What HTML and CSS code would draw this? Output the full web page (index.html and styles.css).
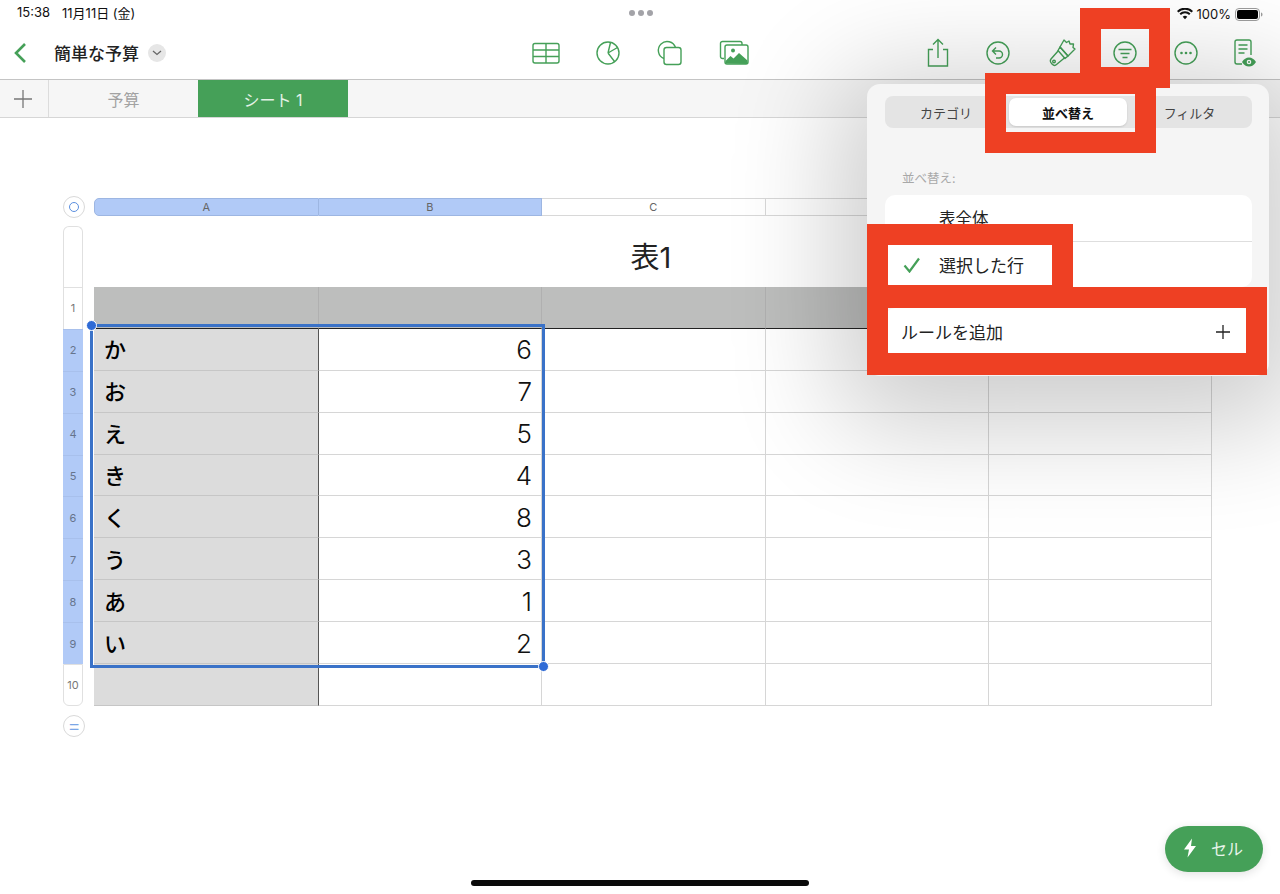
FILE: index.html
```html
<!DOCTYPE html>
<html lang="ja">
<head>
<meta charset="utf-8">
<title>簡単な予算</title>
<link rel="stylesheet" href="styles.css">
</head>
<body>
<div class="screen">
  <header class="status">
    <span class="time">15:38</span>
    <span class="date">11月11日 (金)</span>
    <span class="dots"><i></i><i></i><i></i></span>
    <span class="status-right">
      <svg class="wifi" width="16" height="12" viewBox="0 0 16 12"><path d="M8 11.200 5.700 8.800a3.300 3.300 0 0 1 4.600 0zM3.900 7 2.500 5.500a7.800 7.800 0 0 1 11 0L12.100 7a5.800 5.800 0 0 0-8.200 0zM1.400 4.500 0 3a11.300 11.300 0 0 1 16 0l-1.400 1.500a9.300 9.300 0 0 0-13.200 0z" fill="#111"/></svg>
      <span class="pct">100%</span>
      <svg width="28" height="13" viewBox="0 0 28 13"><rect x=".5" y=".5" width="24" height="12" rx="3.500" fill="none" stroke="#999"/><rect x="2" y="2" width="21" height="9" rx="2" fill="#000"/><path d="M26 4.500c1 .3 1.500 1 1.500 2s-.5 1.700-1.500 2z" fill="#999"/></svg>
    </span>
  </header>

  <nav class="toolbar">
    <div class="tb-left">
      <svg class="back" width="14" height="22" viewBox="0 0 14 22"><path d="M12 2 3 11l9 9" fill="none" stroke="#45a058" stroke-width="2.600"/></svg>
      <span class="doc">簡単な予算</span>
      <span class="doc-menu"><svg width="10" height="6" viewBox="0 0 10 6"><path d="M1 1l4 3.500L9 1" fill="none" stroke="#666" stroke-width="1.300"/></svg></span>
    </div>
    <div class="tb-center">
      <svg class="ic" width="30" height="30" viewBox="0 0 30 30"><g fill="none" stroke="#45a058" stroke-width="1.400"><rect x="2" y="5.500" width="26" height="19.500" rx="2"/><path d="M2 12h26M2 18.500h26M15 5.500V25"/></g></svg>
      <svg class="ic" width="30" height="30" viewBox="0 0 30 30"><g fill="none" stroke="#45a058" stroke-width="1.400"><circle cx="15" cy="15" r="11"/><path d="M15 15 17.500 4.500M15 15l9.500-5.500M15 15l6.500 8.500"/></g></svg>
      <svg class="ic" width="30" height="30" viewBox="0 0 30 30"><g fill="none" stroke="#45a058" stroke-width="1.400"><path d="M9 20.500a8.800 8.800 0 1 1 11.500-11"/><rect x="9" y="9.500" width="17" height="17" rx="2.500" fill="#fff"/></g></svg>
      <svg class="ic ic-media" width="30" height="30" viewBox="0 0 30 30"><g fill="none" stroke="#45a058" stroke-width="1.400"><path d="M5 20.500H3.500A2 2 0 0 1 1.500 18.500V5.500a2 2 0 0 1 2-2H21a2 2 0 0 1 2 2V7"/><rect x="6" y="7" width="23" height="19" rx="2"/></g><circle cx="14" cy="12.500" r="2" fill="#45a058"/><path d="M6.500 25.500V23l5-5 3 2.500 5.500-5.500 8.500 7.500v3.500z" fill="#45a058"/></svg>
    </div>
    <div class="tb-right">
      <svg class="ic" width="30" height="30" viewBox="0 0 30 30"><g fill="none" stroke="#45a058" stroke-width="1.400"><path d="M10 11.500H5.500V28h19V11.500H20M15 20V2M10 6.500 15 1.500l5 5"/></g></svg>
      <svg class="ic" width="30" height="30" viewBox="0 0 30 30"><g fill="none" stroke="#45a058" stroke-width="1.400"><circle cx="15" cy="15" r="11"/><path d="M13 9.500 9.500 13l3.500 3.500M9.500 13h6.500a3.500 3.500 0 0 1 0 7h-3"/></g></svg>
      <svg class="ic" width="30" height="30" viewBox="0 0 30 30"><g fill="none" stroke="#45a058" stroke-width="1.400" stroke-linejoin="round"><path d="M13 9 17 2l2.500 2.500L22 3l1 3h3.500L26 9.500l2 1.500-7 7z"/><path d="M13 9l8 9-3 2.500-7-8z"/><path d="M11.500 12.500 4 21c-1.500 2-.5 3.500 1 5s3 2 4.500.5L18 19.500"/><circle cx="7" cy="23.500" r="1.300"/></g></svg>
      <svg class="ic" width="30" height="30" viewBox="0 0 30 30"><g fill="none" stroke="#45a058" stroke-width="1.400"><circle cx="15" cy="15" r="11"/><path d="M8.500 11.500h13M10.500 15.500h9M12.500 19.500h5"/></g></svg>
      <svg class="ic" width="30" height="30" viewBox="0 0 30 30"><circle cx="15" cy="15" r="11" fill="none" stroke="#45a058" stroke-width="1.400"/><g fill="#45a058"><circle cx="10.500" cy="15" r="1.300"/><circle cx="15" cy="15" r="1.300"/><circle cx="19.500" cy="15" r="1.300"/></g></svg>
      <svg class="ic" width="30" height="30" viewBox="0 0 30 30"><g fill="none" stroke="#45a058" stroke-width="1.400"><path d="M12 26H7a2 2 0 0 1-2-2V4a2 2 0 0 1 2-2h12a2 2 0 0 1 2 2v13"/><path d="M8.500 7h9M8.500 11h9M8.500 15h6"/></g><path d="M12 24c1.800-3 4.300-4.500 7-4.500s5.200 1.500 7 4.500c-1.800 3-4.300 4.500-7 4.500S13.800 27 12 24z" fill="#45a058"/><circle cx="19" cy="24" r="2.300" fill="#fff"/><circle cx="19" cy="24" r="1" fill="#45a058"/></svg>
    </div>
  </nav>

  <div class="tabs">
    <div class="tab-add"><svg width="18" height="18" viewBox="0 0 18 18"><path d="M9 0v18M0 9h18" stroke="#777" stroke-width="1.300"/></svg></div>
    <div class="tab">予算</div>
    <div class="tab tab-active">シート 1</div>
  </div>

  <main class="canvas">
    <div class="col-bar">
      <span class="round"><i class="ring"></i></span>
      <div class="col-heads">
        <span class="ch ch-sel">A</span>
        <span class="ch ch-sel">B</span>
        <span class="ch">C</span>
        <span class="ch">D</span>
        <span class="ch">E</span>
      </div>
    </div>
    <div class="sheet">
      <div class="row-heads">
        <div class="rh-top"></div>
        <div class="rh">1</div>
        <div class="rh rh-sel">2</div>
        <div class="rh rh-sel">3</div>
        <div class="rh rh-sel">4</div>
        <div class="rh rh-sel">5</div>
        <div class="rh rh-sel">6</div>
        <div class="rh rh-sel">7</div>
        <div class="rh rh-sel">8</div>
        <div class="rh rh-sel">9</div>
        <div class="rh rh-last">10</div>
      </div>
      <div class="table-wrap">
        <div class="table-title">表1</div>
        <div class="grid">
          <div class="c hd"></div><div class="c hd"></div><div class="c hd"></div><div class="c hd"></div><div class="c hd"></div>
          <div class="c lab">か</div><div class="c num">6</div><div class="c"></div><div class="c"></div><div class="c"></div>
          <div class="c lab">お</div><div class="c num">7</div><div class="c"></div><div class="c"></div><div class="c"></div>
          <div class="c lab">え</div><div class="c num">5</div><div class="c"></div><div class="c"></div><div class="c"></div>
          <div class="c lab">き</div><div class="c num">4</div><div class="c"></div><div class="c"></div><div class="c"></div>
          <div class="c lab">く</div><div class="c num">8</div><div class="c"></div><div class="c"></div><div class="c"></div>
          <div class="c lab">う</div><div class="c num">3</div><div class="c"></div><div class="c"></div><div class="c"></div>
          <div class="c lab">あ</div><div class="c num">1</div><div class="c"></div><div class="c"></div><div class="c"></div>
          <div class="c lab">い</div><div class="c num">2</div><div class="c"></div><div class="c"></div><div class="c"></div>
          <div class="c lab"></div><div class="c num"></div><div class="c"></div><div class="c"></div><div class="c"></div>
          <div class="selection"><i class="handle h-tl"></i><i class="handle h-br"></i></div>
        </div>
      </div>
    </div>
    <span class="round round-eq">=</span>
  </main>

  <aside class="popover">
    <div class="segment">
      <span class="seg seg-first">カテゴリ</span>
      <span class="seg seg-on">並べ替え</span>
      <span class="seg">フィルタ</span>
    </div>
    <div class="pop-label">並べ替え:</div>
    <div class="card">
      <div class="row"><span class="mark"></span>表全体</div>
      <div class="row row-sep"><span class="mark"><svg width="20" height="16" viewBox="0 0 20 16"><path d="M2.500 8.500 7.500 14.500 17 1.500" fill="none" stroke="#45a058" stroke-width="2.200"/></svg></span>選択した行</div>
    </div>
    <div class="card card-rule">
      <div class="row-rule"><span>ルールを追加</span><svg width="16" height="16" viewBox="0 0 16 16"><path d="M8 1v14M1 8h14" stroke="#222" stroke-width="1.300"/></svg></div>
    </div>
  </aside>

  <div class="mark-box mb-filter"></div>
  <div class="mark-box mb-seg"></div>
  <div class="mark-box mb-row"></div>
  <div class="mark-box mb-rule"></div>

  <div class="fab"><svg width="14" height="20" viewBox="0 0 14 20"><path d="M9 .5 1 11.500h5L4.500 19.500 13 8H8z" fill="#fff"/></svg><span>セル</span></div>
  <div class="home"></div>
</div>
</body>
</html>
```
FILE: styles.css
```css
* { box-sizing: border-box; }
html, body { margin: 0; padding: 0; background: #fff; }
body { font-family: "Inter", "Noto Sans CJK JP", sans-serif; color: #111; }
.screen { position: relative; width: 1280px; height: 894px; overflow: hidden; background: #fff; }

.status { position: relative; height: 26px; display: flex; align-items: center; padding: 0 17px 2px; font-size: 13px; }
.date { margin-left: 12px; font-size: 13px; }
.dots { position: absolute; left: 629px; top: 10px; display: flex; gap: 3px; }
.dots i { width: 6px; height: 6px; border-radius: 50%; background: #a3a3a8; }
.status-right { position: absolute; right: 17px; top: 6px; display: flex; align-items: center; gap: 4px; z-index: 5; }
.pct { font-size: 13px; margin-left: 0; }

.toolbar { height: 54px; display: flex; align-items: center; border-bottom: 1px solid #c4c4c4; background: #fff; }
.tb-left { width: 531px; display: flex; align-items: center; padding-left: 13px; }
.doc { margin-left: 27px; font-size: 17px; font-weight: 500; color: #222; }
.doc-menu { margin-left: 9px; width: 18px; height: 18px; border-radius: 50%; background: #e6e6e6; display: flex; align-items: center; justify-content: center; }
.tb-center { display: flex; gap: 32px; }
.ic { display: block; }
.ic-media { margin-left: 2px; }
.tb-right { margin-left: auto; margin-right: 20px; display: grid; grid-template-columns: 60px 64px 63px 61px 59px 30px; }

.tabs { height: 38px; display: flex; background: #f6f6f6; border-bottom: 1px solid #d6d6d6; }
.tab-add { width: 49px; display: flex; align-items: center; justify-content: center; border-right: 1px solid #dcdcdc; padding-right: 2px; }
.tab { width: 149px; display: flex; align-items: center; justify-content: center; font-size: 16px; color: #a2a2a2; }
.tab-active { width: 150px; background: #45a058; color: #e3f2e6; }

.canvas { padding: 80px 0 0 63px; }
.col-bar { display: flex; align-items: center; height: 18px; }
.round { flex: none; width: 22px; height: 22px; margin-right: 9px; border-radius: 50%; background: #fff; border: 1px solid #d9d9d9; display: flex; align-items: center; justify-content: center; }
.ring { width: 10px; height: 10px; border: 1.200px solid #5b8fdf; border-radius: 50%; }
.col-heads { display: grid; grid-template-columns: 224.500px repeat(3, 223.500px) 223px; height: 18px; }
.ch { display: flex; align-items: center; justify-content: center; font-size: 11px; color: #666; border: 1px solid #d8d8d8; border-left: 0; background: #fff; }
.ch-sel { background: #b1caf7; border-color: #9db6e2; }
.ch-sel:first-child { border-left: 1px solid #9db6e2; border-radius: 5px 0 0 5px; }

.sheet { display: flex; margin-top: 10px; }
.row-heads { width: 20px; margin-right: 11px; }
.rh-top { height: 61px; border: 1px solid #e0e0e0; border-bottom: 0; border-radius: 6px 6px 0 0; }
.rh { height: 41.900px; display: flex; align-items: center; justify-content: center; font-size: 11px; color: #777; border: 1px solid #e0e0e0; border-bottom: 0; background: #fff; }
.rh-sel { background: #b1caf7; border: 0; color: #66748c; border-top: 1px solid #a8c0ec; }
.rh-last { border-bottom: 1px solid #e0e0e0; border-radius: 0 0 6px 6px; }
.table-wrap { width: 1118px; }
.table-title { height: 61px; display: flex; align-items: center; justify-content: center; font-size: 29px; color: #222; padding: 0 4px 4px 0; }
.grid { position: relative; display: grid; grid-template-columns: 224.500px repeat(3, 223.500px) 223px; grid-auto-rows: 41.900px; }
.c { border-right: 1px solid #d6d6d6; border-bottom: 1px solid #d6d6d6; background: #fff; display: flex; align-items: center; }
.hd { background: #bdbebd; border-color: #b0b0b0; border-bottom: 1px solid #222; }
.lab { background: #dcdcdc; border-right: 1.500px solid #555; border-bottom-color: #c6c6c6; padding: 0 0 2px 10px; font-size: 22px; font-weight: 500; color: #000; }
.num { justify-content: flex-end; padding: 1px 9px 0 0; font-size: 26px; font-weight: 300; color: #111; font-family: "Inter", sans-serif; }
.selection { position: absolute; left: -4px; top: 37px; width: 455px; height: 343.500px; border: 3px solid #3a72c8; }
.handle { position: absolute; width: 11px; height: 11px; border-radius: 50%; background: #2f6bd6; border: 1.500px solid #fff; }
.h-tl { left: -7px; top: -7px; }
.h-br { right: -7px; bottom: -7px; }

.round-eq { display: flex; margin: 9px 0 0 0; color: #7ba6e6; font-size: 21px; font-weight: 300; line-height: 1; }

.popover { position: absolute; left: 867px; top: 84px; width: 402px; height: 292px; padding: 12px 17px 0 18px; background: #f5f5f5; border-radius: 13px; box-shadow: 0 20px 110px 30px rgba(0, 0, 0, .2); }
.segment { display: grid; grid-template-columns: repeat(3, 1fr); height: 32px; padding: 2px; background: #e4e4e4; border-radius: 8px; }
.seg { display: flex; align-items: center; justify-content: center; font-size: 13px; color: #444; }
.seg-first { padding-right: 3px; }
.seg-on { margin: 0 2px 0 1px; background: #fff; color: #111; font-weight: 700; border-radius: 7px; box-shadow: 0 1px 2px rgba(0, 0, 0, .12); }
.pop-label { margin: 42px 0 0 17px; height: 25px; font-size: 12.500px; line-height: 18px; color: #a8a8a8; }
.card { background: #fff; border-radius: 10px; }
.row { height: 46px; display: flex; align-items: center; font-size: 17px; color: #222; }
.row:first-child { font-size: 16.500px; }
.row-sep { border-top: 1px solid #dedede; }
.mark { width: 54px; padding-left: 17px; display: flex; align-items: center; }
.card-rule { margin-top: 21px; }
.row-rule { height: 47px; padding: 0 21px 0 16px; display: flex; align-items: center; justify-content: space-between; font-size: 17px; color: #222; }

.mark-box { position: absolute; border: 21px solid #ee4023; }
.mb-filter { left: 1080px; top: 8px; width: 90px; height: 80px; }
.mb-seg { left: 985px; top: 73px; width: 171px; height: 80px; }
.mb-row { left: 867px; top: 224px; width: 206px; height: 82px; }
.mb-rule { left: 867px; top: 287px; width: 400px; height: 88px; border-bottom-width: 22px; }

.fab { position: absolute; left: 1165px; top: 826px; width: 98px; height: 46px; border-radius: 23px; background: #45a058; box-shadow: 0 2px 10px rgba(0, 0, 0, .12); display: flex; align-items: center; padding: 0 0 2px 18px; gap: 14px; color: #e9f5eb; font-size: 16px; }
.home { position: absolute; left: 471px; top: 880px; width: 338px; height: 6px; border-radius: 3px; background: #0a0a0a; }
```
